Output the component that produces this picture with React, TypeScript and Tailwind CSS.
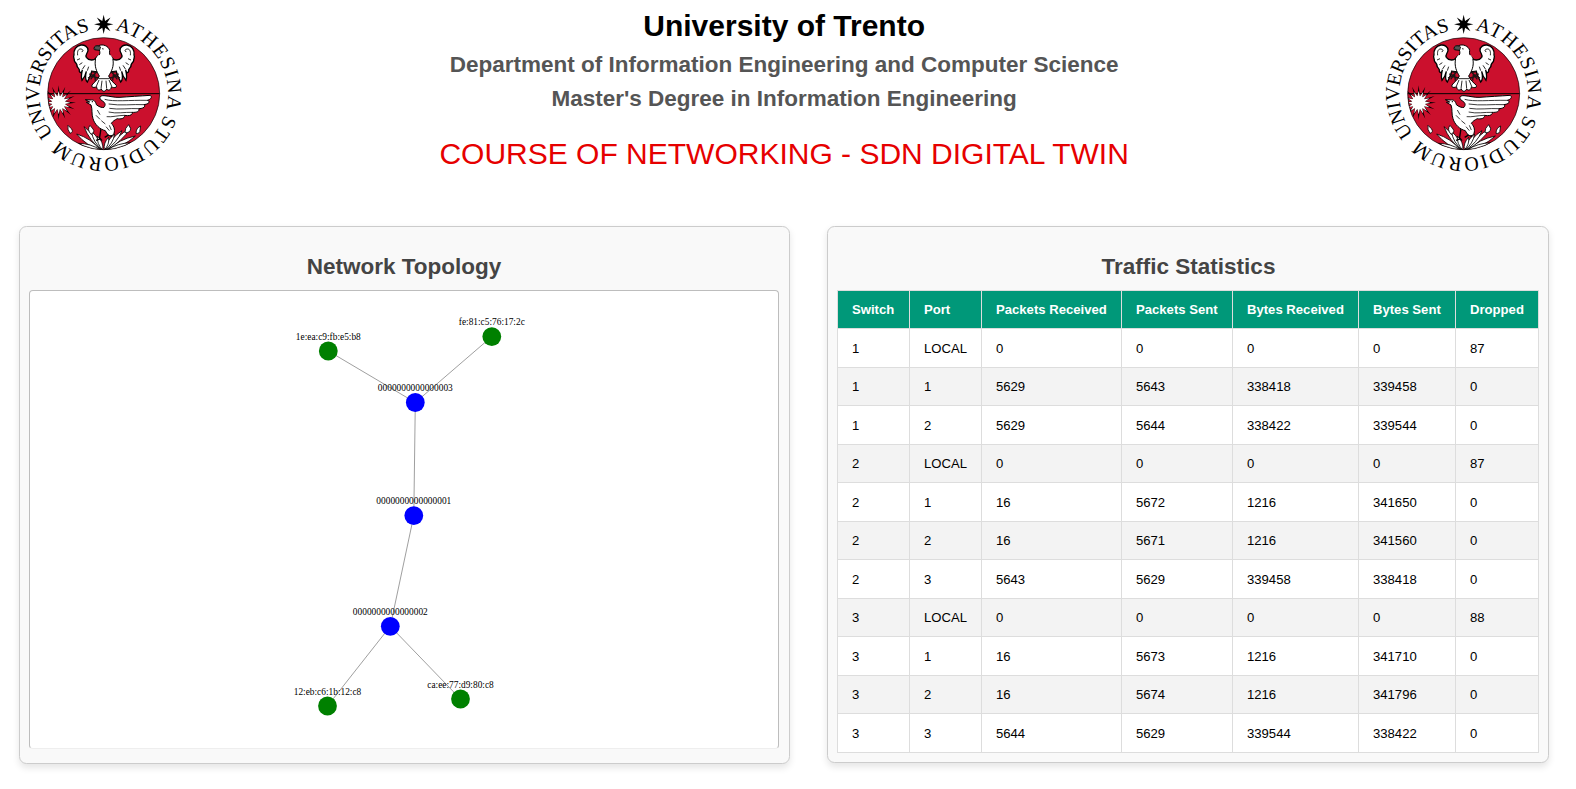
const NODES = [
  { id: '1e:ea:c9:fb:e5:b8', x: 298.3, y: 60.0, kind: 'host' },
  { id: 'fe:81:c5:76:17:2c', x: 461.8, y: 45.6, kind: 'host' },
  { id: '0000000000000003', x: 385.3, y: 111.5, kind: 'switch' },
  { id: '0000000000000001', x: 383.8, y: 224.6, kind: 'switch' },
  { id: '0000000000000002', x: 360.3, y: 335.3, kind: 'switch' },
  { id: '12:eb:c6:1b:12:c8', x: 297.5, y: 415.0, kind: 'host' },
  { id: 'ca:ee:77:d9:80:c8', x: 430.5, y: 408.0, kind: 'host' },
];

const LINKS = [
  [0, 2],
  [1, 2],
  [2, 3],
  [3, 4],
  [4, 5],
  [4, 6],
];

const COLUMNS = ['Switch', 'Port', 'Packets Received', 'Packets Sent', 'Bytes Received', 'Bytes Sent', 'Dropped'];

const ROWS = [
  ['1', 'LOCAL', '0', '0', '0', '0', '87'],
  ['1', '1', '5629', '5643', '338418', '339458', '0'],
  ['1', '2', '5629', '5644', '338422', '339544', '0'],
  ['2', 'LOCAL', '0', '0', '0', '0', '87'],
  ['2', '1', '16', '5672', '1216', '341650', '0'],
  ['2', '2', '16', '5671', '1216', '341560', '0'],
  ['2', '3', '5643', '5629', '339458', '338418', '0'],
  ['3', 'LOCAL', '0', '0', '0', '0', '88'],
  ['3', '1', '16', '5673', '1216', '341710', '0'],
  ['3', '2', '16', '5674', '1216', '341796', '0'],
  ['3', '3', '5644', '5629', '339544', '338422', '0'],
];

const CX = 281;
const CY = 281;
const BASELINE = 193;

// Point at a clockwise angle from twelve o'clock around the given centre.
function polar(r: number, deg: number, cx = CX, cy = CY) {
  const a = (deg * Math.PI) / 180;
  return `${(cx + r * Math.sin(a)).toFixed(1)} ${(cy - r * Math.cos(a)).toFixed(1)}`;
}

function burst(cx: number, cy: number, n: number, outer: number, inner: number) {
  const pts: string[] = [];
  for (let i = 0; i < n * 2; i++) pts.push(polar(i % 2 ? inner : outer, (i * 180) / n, cx, cy));
  return `M${pts.join('L')}Z`;
}

const WORDS = [
  { text: 'UNIVERSITAS', from: 231.5, to: 347.5 },
  { text: 'ATHESINA', from: 10, to: 104 },
  { text: 'STUDIORUM', from: 109, to: 224 },
];

const LEAVES = [
  [200, 402, 13],
  [222, 380, 12],
  [376, 408, 13],
  [362, 384, 12],
  [244, 394, 12],
  [336, 392, 12],
  [262, 408, 11],
  [314, 402, 11],
  [296, 412, 10],
  [206, 430, 10],
  [362, 428, 10],
];

function leaf(x: number, y: number, w: number) {
  const bx = 281 + (x - 281) * 0.12;
  const by = 450;
  const mx = (x + bx) / 2;
  const my = (y + by) / 2;
  const len = Math.hypot(x - bx, y - by);
  const nx = (-(y - by) / len) * w;
  const ny = ((x - bx) / len) * w;
  return `M${bx} ${by}Q${mx + nx} ${my + ny} ${x} ${y}Q${mx - nx} ${my - ny} ${bx} ${by}Z`;
}

function EagleHalf() {
  return (
    <g>
      <path
        d="M262 170C252 184 236 182 229 172C224 164 234 160 234 151C234 140 223 134 213 135C198 137 190 150 192 165C188 172 194 176 193 182C196 190 202 190 201 198C203 206 210 204 208 214C211 222 216 216 217 210C214 222 212 230 216 241C222 234 227 226 229 214C225 230 226 240 232 246C238 234 242 226 245 214L262 216Z"
        fill="#fff"
        stroke="#000"
        strokeWidth="4"
      />
      <path
        d="M203 166C201 152 206 146 213 147C220 148 221 155 215 155M201 180L210 176M208 194L217 188M217 208L225 196M232 212L236 200"
        fill="none"
        stroke="#000"
        strokeWidth="2.5"
      />
      <path
        d="M262 214L250 226L238 222M254 222L242 238M254 224L256 242M250 226L234 234M260 218L244 214M244 228L264 234"
        fill="none"
        stroke="#1c1414"
        strokeWidth="4"
      />
    </g>
  );
}

function Seal({ name }: { name: string }) {
  return (
    <svg viewBox="0 0 570 570" className="block size-[190px] shrink-0">
      <defs>
        {WORDS.map((w) => (
          <path
            key={w.text}
            id={`${name}-${w.text}`}
            d={`M${polar(BASELINE, w.from)}A${BASELINE} ${BASELINE} 0 0 1 ${polar(BASELINE, w.to + 6)}`}
          />
        ))}
        <clipPath id={`${name}-disc`}>
          <circle cx={CX} cy={CY} r="168" />
        </clipPath>
      </defs>
      {WORDS.map((w) => (
        <text key={w.text} fontSize="60" className="fill-black font-['Liberation_Serif',serif]">
          <textPath
            href={`#${name}-${w.text}`}
            textLength={((w.to - w.from) * Math.PI * BASELINE) / 180}
            lengthAdjust="spacing"
          >
            {w.text}
          </textPath>
        </text>
      ))}
      <path d={burst(281, 73, 8, 29, 11)} fill="#000" />
      <circle cx={CX} cy={CY} r="168" fill="#cb102d" />
      <g clipPath={`url(#${name}-disc)`}>
        <EagleHalf />
        <g transform="translate(564 0) scale(-1 1)">
          <EagleHalf />
        </g>
        <path
          d="M268 150L253 149C250 143 256 136 266 137C278 131 296 138 299 151C297 162 300 168 308 174C314 200 303 216 296 228C300 240 310 247 319 256C322 265 309 264 304 260C304 270 294 273 290 267C286 276 277 276 274 267C268 273 260 270 260 260C252 264 243 263 246 255C252 246 264 240 268 228C260 214 252 200 257 174C266 168 273 164 268 150Z"
          fill="#fff"
          stroke="#000"
          strokeWidth="3"
        />
        <path d="M259 175L264 166L303 166L307 175L304 190L260 190Z" fill="#fff" />
        <path
          d="M276 146L281 147M267 240L259 259M276 242L273 266M288 242L290 266M297 240L305 259M266 236H298"
          fill="none"
          stroke="#000"
          strokeWidth="2.5"
        />
        <path d="M253 141C257 136 266 137 272 141L269 151L255 149Z" fill="#555" stroke="#000" strokeWidth="2" />
        <path d="M112 281H450" stroke="#000" strokeWidth="3" />
        <path d={burst(146, 308, 16, 52, 20)} fill="#000" />
        <path d={burst(146, 308, 16, 35, 19)} fill="#fff" />
        <circle cx="146" cy="308" r="20" fill="#fff" />
        {LEAVES.map(([x, y, w]) => (
          <path key={`${x}-${y}`} d={leaf(x, y, w)} fill="#fff" stroke="#000" strokeWidth="2.5" />
        ))}
        <path
          d="M174 376Q171 388 180 400Q192 396 184 386ZM240 376Q230 388 243 403Q256 396 249 387ZM356 374Q344 384 345 398Q360 400 362 386ZM392 378Q378 384 378 400Q390 402 390 390Z"
          fill="#fff"
          stroke="#000"
          strokeWidth="2.5"
        />
        <path
          d="M274 380L268 418L258 421M268 412L276 422M292 384L294 406L284 412M294 404L306 410"
          fill="none"
          stroke="#000"
          strokeWidth="4"
        />
        <path
          d="M226 299L242 300C250 298 257 304 259 314C266 320 276 324 282 322C288 314 286 308 276 302C266 296 268 286 282 287C300 288 312 293 330 292C355 290 390 288 421 286C428 292 422 298 412 301C422 304 418 312 402 314C408 320 400 326 386 326C390 334 380 338 366 337C370 345 356 349 344 346C344 356 332 358 322 356C314 360 308 364 304 370C314 380 316 394 310 404C300 412 292 404 286 392C270 388 254 374 249 356C244 342 248 328 243 315L229 307L239 306Z"
          fill="#fff"
          stroke="#000"
          strokeWidth="3"
        />
        <path
          d="M284 298C310 306 360 300 412 301M296 312C330 318 370 312 402 314M298 325C325 330 360 324 386 326M296 336C320 342 345 336 366 337M290 350C305 352 325 346 344 346M262 330L270 344M258 346L270 358M274 362L286 372M288 380L298 392M298 376L304 390"
          fill="none"
          stroke="#000"
          strokeWidth="2.3"
        />
        <circle cx="247" cy="305" r="2" fill="#000" />
      </g>
      <circle cx={CX} cy={CY} r="168" fill="none" stroke="#000" strokeWidth="2" />
    </svg>
  );
}

function Topology() {
  return (
    <svg
      viewBox="0 0 748 457"
      className="block h-[459px] w-[750px] rounded-[4px] border border-[#bdbdbd] border-b-[#eeeeee] bg-white"
    >
      {LINKS.map(([a, b]) => (
        <line
          key={`${a}-${b}`}
          x1={NODES[a].x}
          y1={NODES[a].y}
          x2={NODES[b].x}
          y2={NODES[b].y}
          stroke="#999"
          strokeWidth="0.94"
        />
      ))}
      {NODES.map((n) => (
        <circle key={n.id} cx={n.x} cy={n.y} r="9.4" fill={n.kind === 'host' ? 'green' : 'blue'} />
      ))}
      {NODES.map((n) => (
        <text
          key={n.id}
          x={n.x}
          y={n.y - 11.2}
          fontSize="9.375"
          textAnchor="middle"
          className="fill-black font-['Liberation_Serif',serif]"
        >
          {n.id}
        </text>
      ))}
    </svg>
  );
}

export default function App() {
  return (
    <div className="h-[789px] w-full overflow-hidden bg-white font-['Liberation_Sans',Arial,sans-serif] text-black">
      <header className="flex h-[226px] items-start pl-[10px]">
        <Seal name="left" />
        <div className="flex w-[1170.3px] shrink-0 flex-col items-center pt-[9px] pr-[2px] text-center whitespace-nowrap">
          <h1 className="text-[30px] leading-[34px] font-bold">University of Trento</h1>
          <h2 className="mt-[9px] text-[22.5px] leading-[26px] font-bold text-[#555]">
            Department of Information Engineering and Computer Science
          </h2>
          <h2 className="mt-[8px] text-[22.5px] leading-[26px] font-bold text-[#555]">
            Master's Degree in Information Engineering
          </h2>
          <p className="mt-[25px] text-[30px] leading-[34px] text-[#e60000]">COURSE OF NETWORKING - SDN DIGITAL TWIN</p>
        </div>
        <Seal name="right" />
      </header>

      <main className="flex items-start pl-[19px]">
        <section className="h-[538px] w-[771px] rounded-[7.5px] border border-[#ccc] bg-[#f9f9f9] px-[9.4px] shadow-[0_3.75px_7.5px_rgba(0,0,0,0.1)]">
          <h2 className="pt-[27px] pr-px pb-[10px] text-center text-[22.5px] leading-[26px] font-bold text-[#444]">
            Network Topology
          </h2>
          <Topology />
        </section>

        <section className="ml-[37px] h-[537px] w-[722px] rounded-[7.5px] border border-[#ccc] bg-[#f9f9f9] px-[9px] shadow-[0_3.75px_7.5px_rgba(0,0,0,0.1)]">
          <h2 className="pt-[27px] pb-[10px] pl-px text-center text-[22.5px] leading-[26px] font-bold text-[#444]">
            Traffic Statistics
          </h2>
          <table className="w-[702px] table-fixed border-collapse bg-white text-left text-[13.125px] leading-[15px]">
            <colgroup>
              <col className="w-[72px]" />
              <col className="w-[72px]" />
              <col className="w-[140px]" />
              <col className="w-[111px]" />
              <col className="w-[126px]" />
              <col className="w-[97px]" />
              <col className="w-[83px]" />
            </colgroup>
            <thead>
              <tr className="h-[38px] bg-[#009879] text-white">
                {COLUMNS.map((c) => (
                  <th key={c} className="border border-[#ddd] py-0 pl-[14px] font-bold whitespace-nowrap">
                    {c}
                  </th>
                ))}
              </tr>
            </thead>
            <tbody>
              {ROWS.map((row, i) => (
                <tr key={i} className={i % 2 ? 'h-[38px] bg-[#f3f3f3]' : 'h-[39px] bg-white'}>
                  {row.map((cell, j) => (
                    <td
                      key={j}
                      className={
                        i % 2 ? 'border border-[#ddd] py-0 pb-px pl-[14px]' : 'border border-[#ddd] py-0 pt-px pl-[14px]'
                      }
                    >
                      {cell}
                    </td>
                  ))}
                </tr>
              ))}
            </tbody>
          </table>
        </section>
      </main>
    </div>
  );
}
